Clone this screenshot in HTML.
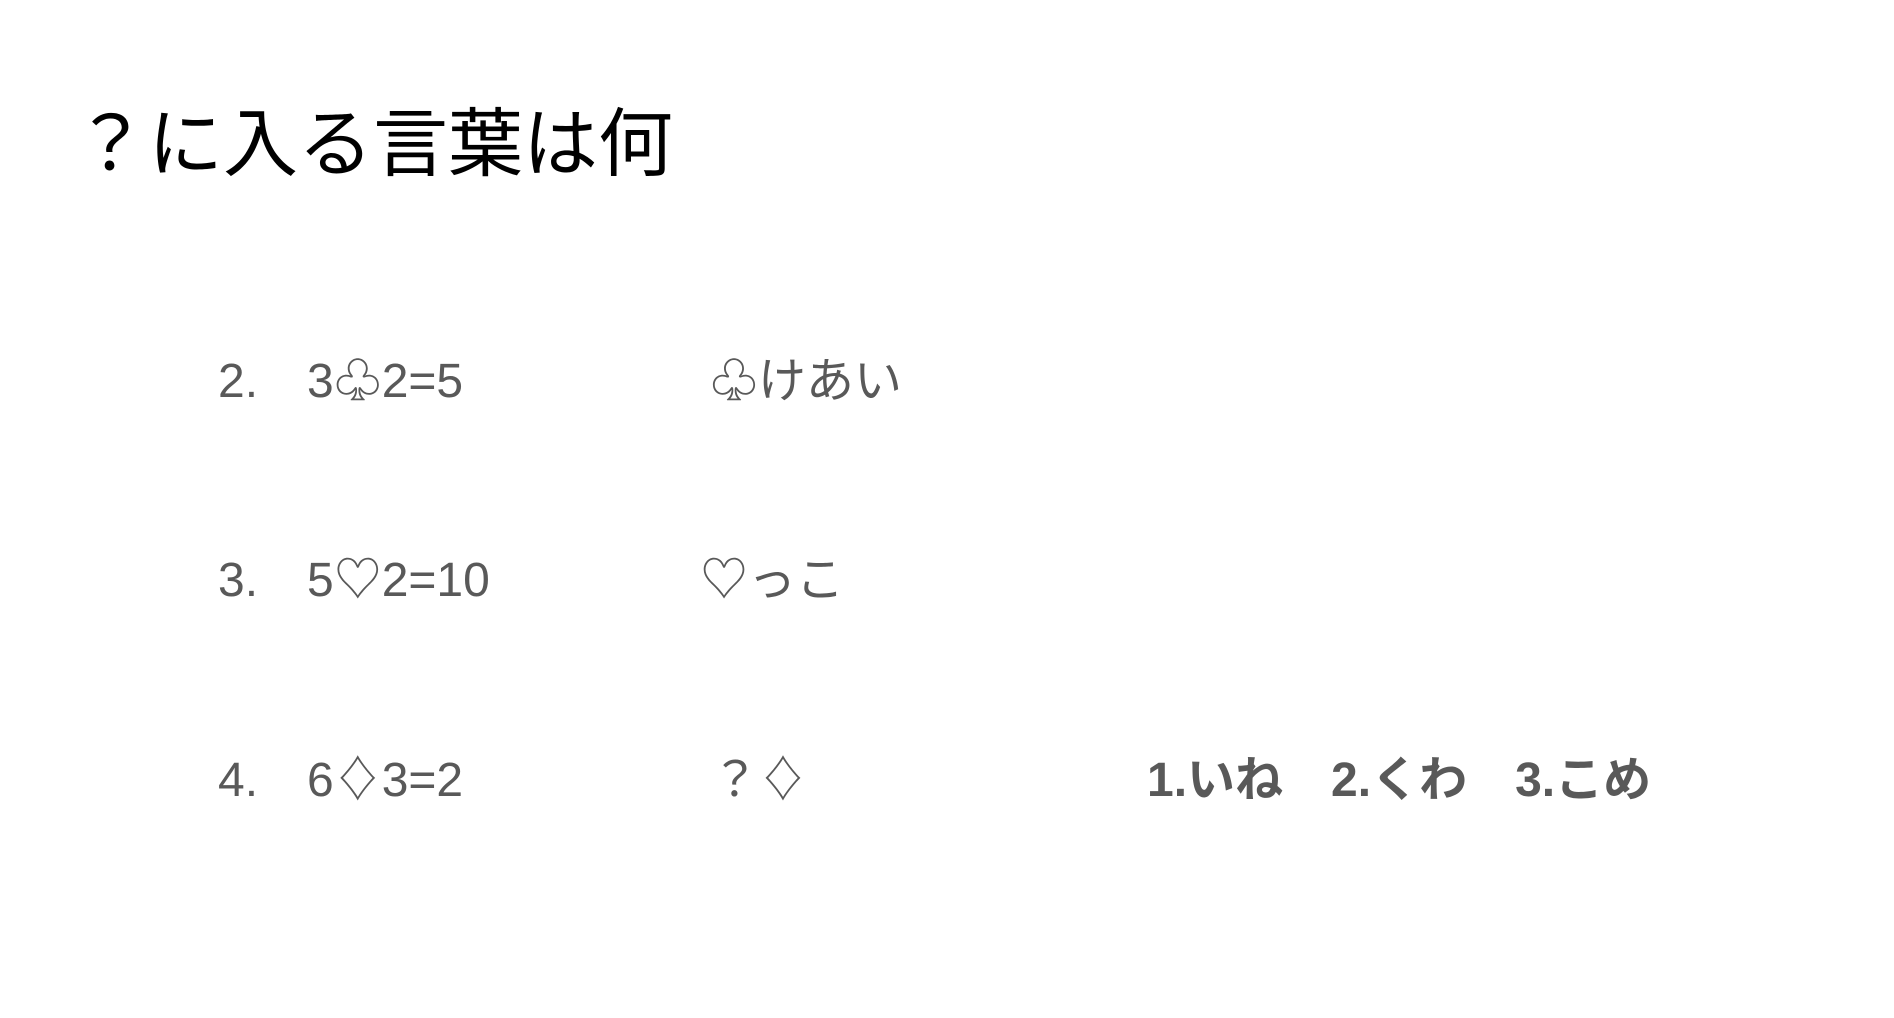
<!DOCTYPE html>
<html><head><meta charset="utf-8"><style>
html,body{margin:0;padding:0;background:#fff;width:1894px;height:1018px;overflow:hidden}
.t{position:absolute;white-space:pre;line-height:1;font-family:"Liberation Sans","Noto Sans CJK JP",sans-serif}
.h{font-size:75px;color:#000}
.r{font-size:48px;color:#595959}
.b{font-weight:bold}
</style></head><body>
<div class="t h" style="left:73px;top:107px">？に入る言葉は何</div>

<div class="t r" style="left:218px;top:358px">2.</div>
<div class="t r" style="left:307px;top:358px">3♧2=5</div>
<div class="t r" style="left:710px;top:358px">♧けあい</div>

<div class="t r" style="left:218px;top:557px">3.</div>
<div class="t r" style="left:307px;top:557px">5♡2=10</div>
<div class="t r" style="left:700px;top:557px">♡っこ</div>

<div class="t r" style="left:218px;top:757px">4.</div>
<div class="t r" style="left:307px;top:757px">6♢3=2</div>
<div class="t r" style="left:711px;top:757px">？♢</div>

<div class="t r b" style="left:1147px;top:757px">1.いね　2.くわ　3.こめ</div>
</body></html>
